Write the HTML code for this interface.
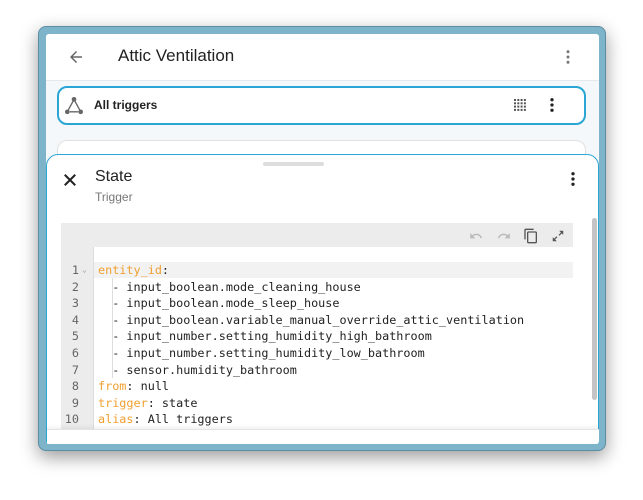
<!DOCTYPE html>
<html><head><style>
*{margin:0;padding:0;box-sizing:border-box}
body{width:643px;height:500px;background:#fff;position:relative;overflow:hidden;font-family:"Liberation Sans",sans-serif}
.frame{position:absolute;left:38px;top:26px;width:568px;height:425px;background:#7eb4ca;border-radius:8px;box-shadow:0 6px 18px rgba(0,0,0,.4);border:1px solid #5d8da2}
.inner{position:absolute;left:7px;top:7px;width:553px;height:410px;background:#f5f8fa;overflow:hidden;border-radius:3px}
.hdr{position:absolute;left:0;top:0;width:553px;height:47px;background:#fff;border-bottom:1px solid #e6e9eb}
.card{position:absolute;left:11px;top:52px;width:529px;height:39px;background:#fff;border:2px solid #2aa6d5;border-radius:10px}
.card2{position:absolute;left:11px;top:106px;width:529px;height:40px;background:#fff;border:1px solid #e0e0e0;border-radius:10px}
.sheet{position:absolute;left:0;top:120px;width:553px;height:300px;background:#fff;border:1px solid #2aa6d5;border-radius:12px 12px 0 0}
.mono{font-family:"DejaVu Sans Mono","Liberation Mono",monospace;font-size:11.8px}
.ln{position:absolute;left:0;width:18px;text-align:right;color:#666}
.cl{position:absolute;left:37px;color:#222;white-space:pre}
.k{color:#f0a030}
</style></head><body>
<div class="frame"><div class="inner">
 <div class="hdr">
  <svg style="position:absolute;left:21px;top:14px" width="18" height="18" viewBox="0 0 24 24"><path d="M20 11H7.8l5.6-5.6L12 4l-8 8 8 8 1.4-1.4L7.8 13H20z" fill="#666"/></svg>
  <div style="position:absolute;left:72px;top:12px;font-size:17px;color:#222">Attic Ventilation</div>
  <svg style="position:absolute;left:513px;top:14px" width="18" height="18" viewBox="0 0 24 24"><circle cx="12" cy="5" r="2" fill="#777"/><circle cx="12" cy="12" r="2" fill="#777"/><circle cx="12" cy="19" r="2" fill="#777"/></svg>
 </div>
 <div class="card">
  <svg style="position:absolute;left:5px;top:8px" width="20" height="20" viewBox="0 0 24 24" fill="none" stroke="#666" stroke-width="1.6"><circle cx="12" cy="4" r="2" fill="#666"/><circle cx="4" cy="19" r="2" fill="#666"/><circle cx="20" cy="19" r="2" fill="#666"/><path d="M11 6L5 17M13 6l6 11M7 19h10"/></svg>
  <div style="position:absolute;left:35px;top:10px;font-size:12px;font-weight:bold;color:#222">All triggers</div>
  <svg style="position:absolute;left:455px;top:11px" width="12" height="12" viewBox="0 0 12 12" fill="#555"><g id="r"><rect x="0" y="0" width="2" height="2"/><rect x="3.3" y="0" width="2" height="2"/><rect x="6.6" y="0" width="2" height="2"/><rect x="9.9" y="0" width="2" height="2"/></g><use href="#r" y="3.3"/><use href="#r" y="6.6"/><use href="#r" y="9.9"/></svg>
  <svg style="position:absolute;left:484px;top:8px" width="18" height="18" viewBox="0 0 24 24"><circle cx="12" cy="5" r="2.2" fill="#222"/><circle cx="12" cy="12" r="2.2" fill="#222"/><circle cx="12" cy="19" r="2.2" fill="#222"/></svg>
 </div>
 <div class="card2"></div>
 <div class="sheet">
  <div style="position:absolute;left:216px;top:7px;width:61px;height:4px;background:#ddd;border-radius:2px"></div>
  <svg style="position:absolute;left:14px;top:16px" width="18" height="18" viewBox="0 0 24 24"><path d="M5 5l14 14M19 5L5 19" stroke="#222" stroke-width="2.6"/></svg>
  <div style="position:absolute;left:48px;top:13px;font-size:16px;color:#222">State</div>
  <div style="position:absolute;left:48px;top:35px;font-size:12px;color:#777">Trigger</div>
  <svg style="position:absolute;left:517px;top:15px" width="18" height="18" viewBox="0 0 24 24"><circle cx="12" cy="5" r="2.2" fill="#222"/><circle cx="12" cy="12" r="2.2" fill="#222"/><circle cx="12" cy="19" r="2.2" fill="#222"/></svg>
  <div style="position:absolute;left:545px;top:63px;width:5px;height:182px;background:#c4c4c4;border-radius:3px"></div>
  <div style="position:absolute;left:14px;top:68px;width:512px;height:220px;background:#ececec">
   <svg style="position:absolute;left:408px;top:6px" width="14" height="14" viewBox="0 0 24 24"><path d="M12.5 8c-2.6 0-5 1-6.9 2.6L2 7v9h9l-3.6-3.6c1.4-1.2 3.2-1.9 5.1-1.9 3.5 0 6.5 2.3 7.6 5.5l2.4-.8C21 11 17.1 8 12.5 8z" fill="#bbb"/></svg>
   <svg style="position:absolute;left:436px;top:6px" width="14" height="14" viewBox="0 0 24 24"><path d="M11.5 8c2.6 0 5 1 6.9 2.6L22 7v9h-9l3.6-3.6c-1.4-1.2-3.2-1.9-5.1-1.9-3.5 0-6.5 2.3-7.6 5.5L1.5 15.2C3 11 6.9 8 11.5 8z" fill="#bbb"/></svg>
   <svg style="position:absolute;left:462px;top:5px" width="16" height="16" viewBox="0 0 24 24"><path d="M16 1H4c-1.1 0-2 .9-2 2v14h2V3h12zm3 4H8c-1.1 0-2 .9-2 2v14c0 1.1.9 2 2 2h11c1.1 0 2-.9 2-2V7c0-1.1-.9-2-2-2zm0 16H8V7h11z" fill="#555"/></svg>
   <svg style="position:absolute;left:490px;top:6px" width="14" height="14" viewBox="0 0 24 24"><path d="M14 3h7v7l-2.5-2.5-4 4-1.5-1.5 4-4zM10 21H3v-7l2.5 2.5 4-4 1.5 1.5-4 4z" fill="#555"/></svg>
   <div style="position:absolute;left:32px;top:24px;width:480px;height:196px;background:#fff;border-left:1px solid #ddd"></div>
   <div style="position:absolute;left:33px;top:39px;width:479px;height:16px;background:#f2f2f2"></div>
   <div style="position:absolute;left:51px;top:55px;width:1px;height:100px;background:#ddd"></div>
   <div class="mono" style="position:absolute;left:0;top:39px;width:512px;line-height:16.6px">
    <div class="ln" style="top:0">1</div><div style="position:absolute;left:21px;top:0;font-size:8px;color:#999">⌄</div><div class="cl" style="top:0"><span class="k">entity_id</span>:</div>
    <div class="ln" style="top:16.6px">2</div><div class="cl" style="top:16.6px">  - input_boolean.mode_cleaning_house</div>
    <div class="ln" style="top:33.2px">3</div><div class="cl" style="top:33.2px">  - input_boolean.mode_sleep_house</div>
    <div class="ln" style="top:49.8px">4</div><div class="cl" style="top:49.8px">  - input_boolean.variable_manual_override_attic_ventilation</div>
    <div class="ln" style="top:66.4px">5</div><div class="cl" style="top:66.4px">  - input_number.setting_humidity_high_bathroom</div>
    <div class="ln" style="top:83px">6</div><div class="cl" style="top:83px">  - input_number.setting_humidity_low_bathroom</div>
    <div class="ln" style="top:99.6px">7</div><div class="cl" style="top:99.6px">  - sensor.humidity_bathroom</div>
    <div class="ln" style="top:116.2px">8</div><div class="cl" style="top:116.2px"><span class="k">from</span>: null</div>
    <div class="ln" style="top:132.8px">9</div><div class="cl" style="top:132.8px"><span class="k">trigger</span>: state</div>
    <div class="ln" style="top:149.4px">10</div><div class="cl" style="top:149.4px"><span class="k">alias</span>: All triggers</div>
   </div>
  </div>
  <div style="position:absolute;left:0;top:274px;width:553px;height:26px;background:#fff;border-top:1px solid #e4e4e4;box-shadow:0 -2px 4px rgba(0,0,0,.06)"></div>
 </div>
</div></div>
</body></html>
